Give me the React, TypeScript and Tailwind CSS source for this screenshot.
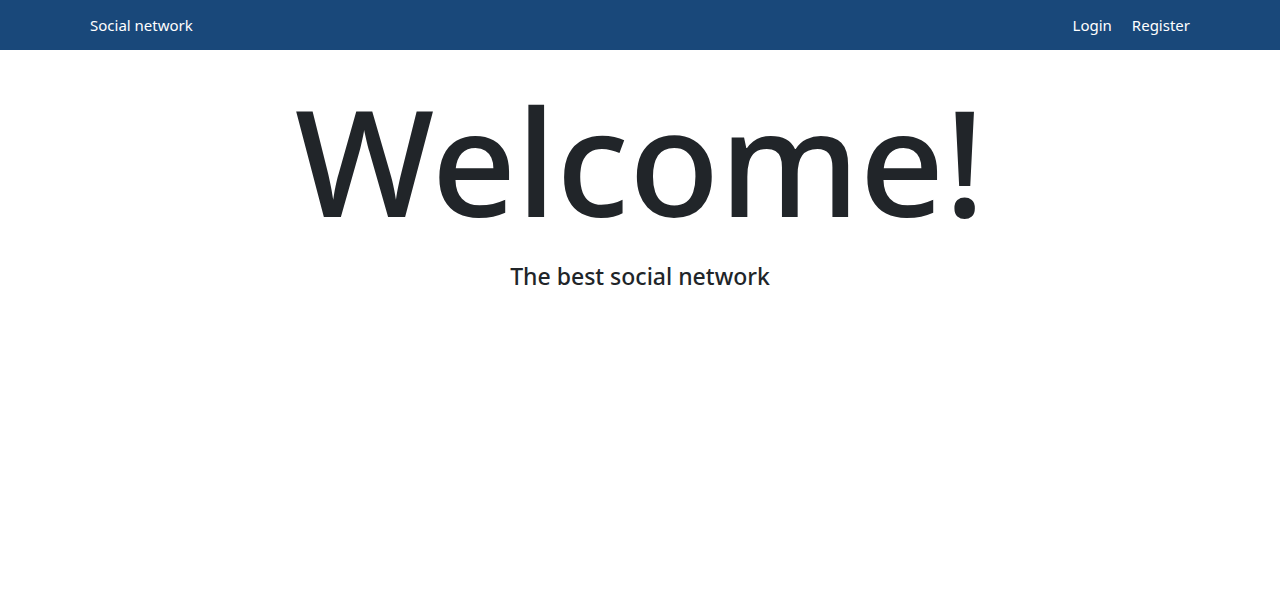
const App = () => {
    return (
        <div className="min-h-screen bg-white" style={{ fontFamily: '"Noto Sans", "Open Sans", sans-serif' }}>
            <nav className="h-[50px] bg-[#19487a] flex items-center justify-between px-[90px] text-white text-[15px]">
                <a href="#">Social network</a>
                <div className="flex items-center gap-[20px]">
                    <a href="#">Login</a>
                    <a href="#">Register</a>
                </div>
            </nav>

            <main className="flex flex-col items-center text-[#212529]">
                <h1 className="text-[148px] font-medium leading-[1.4] mt-[6px]">Welcome!</h1>
                <p className="text-[23px] font-medium leading-none mt-[2px]">The best social network</p>
            </main>
        </div>
    )
}

export default App
